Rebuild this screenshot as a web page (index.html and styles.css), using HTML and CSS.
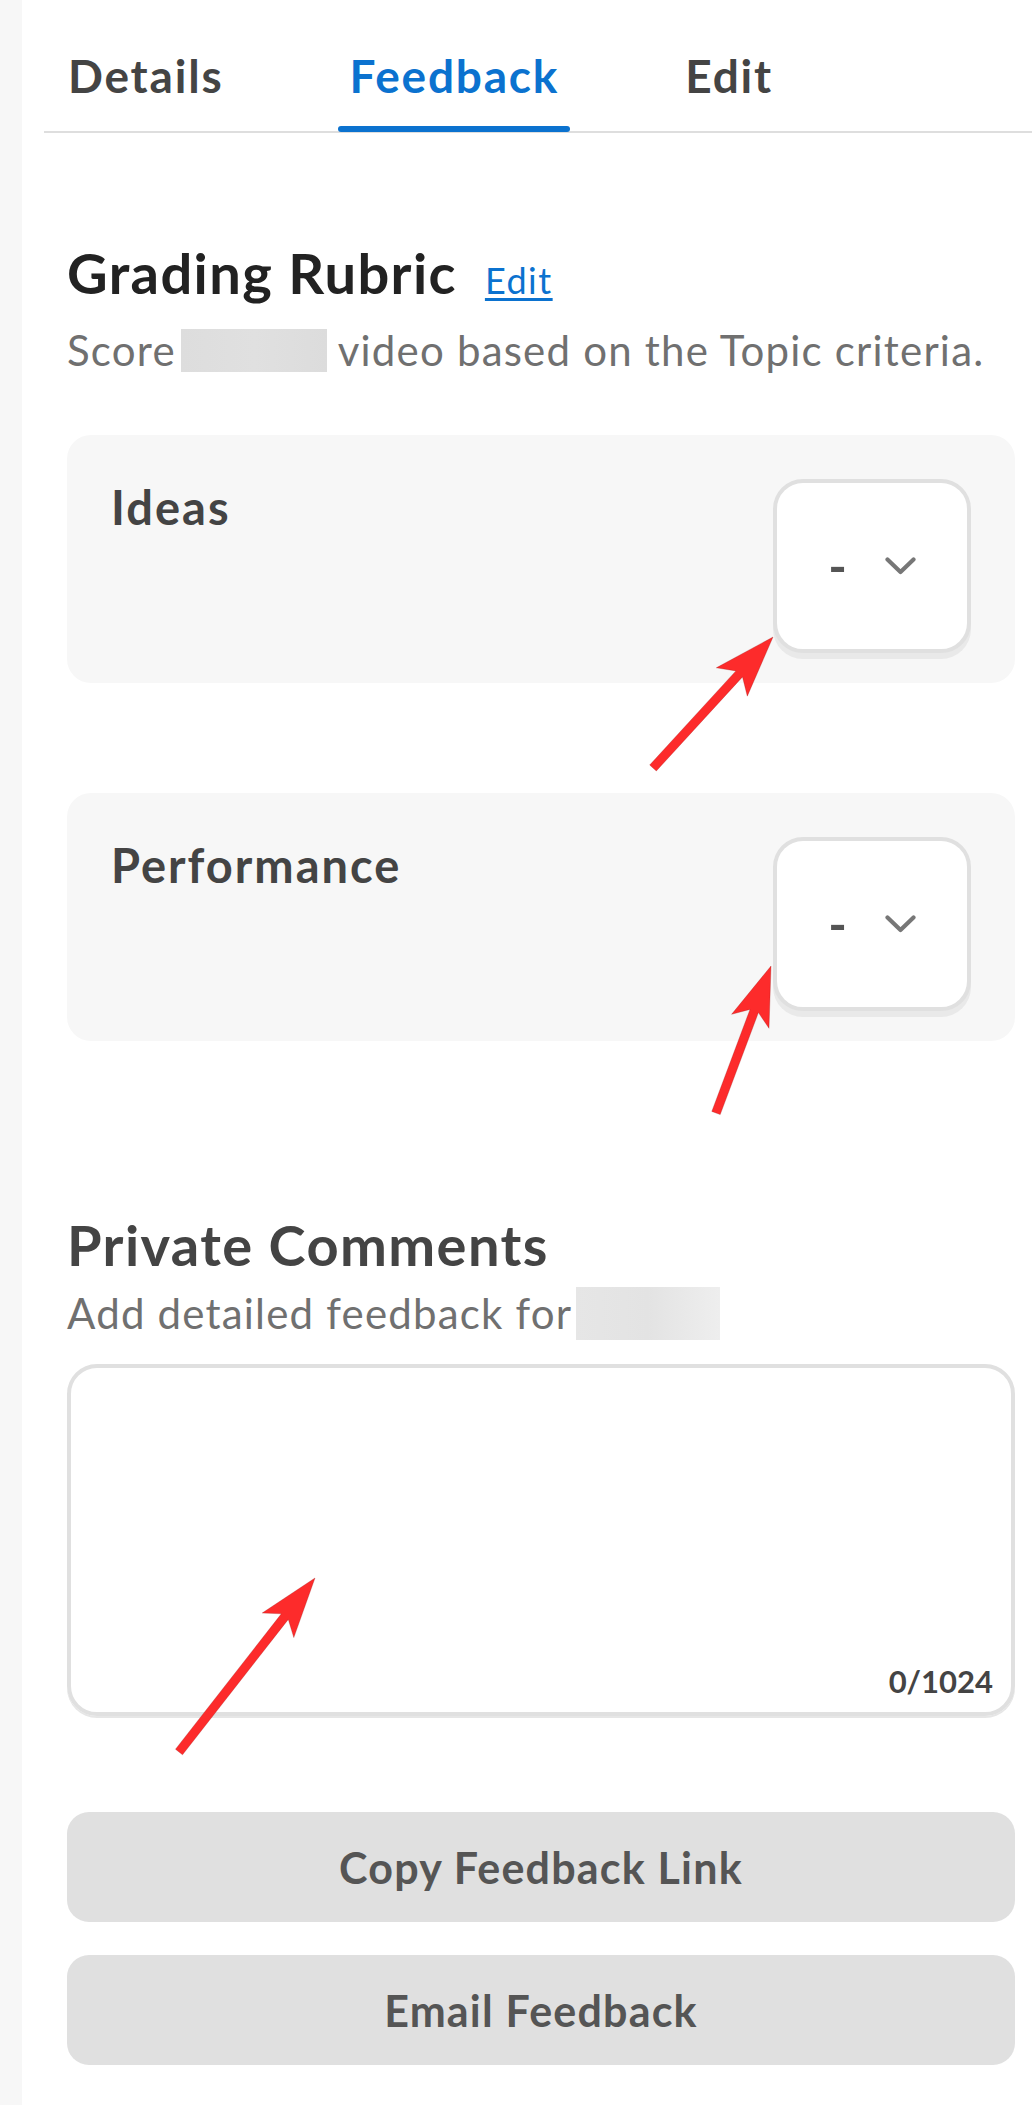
FILE: index.html
```html
<!DOCTYPE html>
<html lang="en">
<head>
<meta charset="utf-8">
<title>Feedback</title>
<link rel="stylesheet" href="styles.css">
</head>
<body>
<div class="page">
  <aside class="rail"></aside>
  <main class="main">
    <nav class="tabs">
      <a class="tab">Details</a>
      <a class="tab active">Feedback</a>
      <a class="tab">Edit</a>
    </nav>
    <div class="content">
      <section class="rubric">
        <div class="heading-row">
          <h2 class="heading">Grading Rubric</h2>
          <a class="edit-link">Edit</a>
        </div>
        <p class="sub">Score<span class="redact redact-a"></span> video based on the Topic criteria.</p>
        <div class="criteria">
          <div class="criterion">
            <span class="criterion-label">Ideas</span>
            <div class="score-select">
              <span class="score-value">-</span>
              <svg class="chevron" width="31" height="18" viewBox="0 0 31 18"><polyline points="2.5,2.5 15.5,15 28.5,2.5" fill="none" stroke="#777" stroke-width="4.2" stroke-linecap="round" stroke-linejoin="round"/></svg>
            </div>
          </div>
          <div class="criterion">
            <span class="criterion-label">Performance</span>
            <div class="score-select">
              <span class="score-value">-</span>
              <svg class="chevron" width="31" height="18" viewBox="0 0 31 18"><polyline points="2.5,2.5 15.5,15 28.5,2.5" fill="none" stroke="#777" stroke-width="4.2" stroke-linecap="round" stroke-linejoin="round"/></svg>
            </div>
          </div>
        </div>
      </section>
      <section class="comments">
        <h2 class="heading heading-muted">Private Comments</h2>
        <p class="sub sub-tight">Add detailed feedback for<span class="redact redact-b"></span></p>
        <div class="comment-box">
          <textarea class="comment-input"></textarea>
          <span class="counter">0/1024</span>
        </div>
        <div class="actions">
          <button class="action-btn">Copy Feedback Link</button>
          <button class="action-btn">Email Feedback</button>
        </div>
      </section>
    </div>
  </main>
  <svg class="annotations" width="1032" height="2105" viewBox="0 0 1032 2105">
    <polygon class="arrow" points="773,637 747.3,696.2 742.5,676.9 656.3,771 649.7,765 735.9,670.9 716.3,667.8"/>
    <polygon class="arrow" points="771,966 769,1028.3 758.4,1012.6 720.2,1114.6 711.8,1111.4 750,1009.4 731.6,1014.3"/>
    <polygon class="arrow" points="315,1578 293.8,1637.6 288.3,1619.4 182.5,1754.8 175.5,1749.2 281.3,1613.8 262.2,1613"/>
  </svg>
</div>
</body>
</html>
```

FILE: styles.css
```css
html, body {
  margin: 0;
  padding: 0;
  background: #ffffff;
}

body {
  font-family: "Lato", "Liberation Sans", sans-serif;
  color: #444444;
}

.page {
  position: relative;
  display: flex;
  min-height: 2105px;
}

.rail {
  width: 22px;
  flex: 0 0 22px;
  background: #f7f7f7;
}

.main {
  flex: 1;
  min-width: 0;
}

/* Tabs */
.tabs {
  display: flex;
  gap: 104px;
  margin-left: 22px;
  padding-left: 13px;
  border-bottom: 2px solid #dedede;
}

.tab {
  position: relative;
  padding: 48px 11px 27px;
  font-size: 46px;
  line-height: 56px;
  font-weight: 700;
  letter-spacing: 1.8px;
  color: #444444;
  text-decoration: none;
}

.tab.active {
  color: #0b72cf;
}

.tab.active::after {
  content: "";
  position: absolute;
  left: 0;
  right: 0;
  bottom: -1px;
  height: 6px;
  border-radius: 3px;
  background: #0b72cf;
}

/* Content */
.content {
  padding: 108px 17px 0 45px;
}

.heading-row {
  display: flex;
  align-items: baseline;
  gap: 28px;
}

.heading {
  margin: 0;
  font-size: 56px;
  line-height: 64px;
  font-weight: 700;
  letter-spacing: 1.4px;
  color: #222222;
}

.heading-muted {
  color: #444444;
}

.edit-link {
  font-size: 36px;
  line-height: 40px;
  font-weight: 400;
  letter-spacing: 1.5px;
  color: #0b72cf;
  text-decoration: underline;
  text-decoration-thickness: 3px;
  text-underline-offset: 4px;
}

.sub {
  margin: 17px 0 0;
  font-size: 42px;
  line-height: 56px;
  letter-spacing: 1.2px;
  color: #707070;
}

.sub-tight {
  margin-top: 8px;
}

.redact {
  display: inline-block;
  background: linear-gradient(90deg, #dddddd, #e0e0e0 50%, #dcdcdc);
}

.redact-a {
  width: 146px;
  height: 43px;
  margin-left: 5px;
  vertical-align: -6px;
}

.redact-b {
  width: 144px;
  height: 53px;
  margin-left: 4px;
  vertical-align: -11px;
  background: linear-gradient(90deg, #e6e6e6, #e3e3e3 50%, #eeeeee);
}

/* Criteria cards */
.criteria {
  margin-top: 57px;
  display: flex;
  flex-direction: column;
  gap: 110px;
}

.criterion {
  display: flex;
  justify-content: space-between;
  align-items: flex-start;
  background: #f7f7f7;
  border-radius: 24px;
  padding: 44px 44px 30px;
}

.criterion-label {
  font-size: 47px;
  line-height: 57px;
  font-weight: 700;
  letter-spacing: 2px;
  color: #444444;
}

.score-select {
  width: 198px;
  height: 174px;
  box-sizing: border-box;
  border: 4px solid #e0e0e0;
  border-radius: 30px;
  background: #ffffff;
  box-shadow: 0 6px 0 #e9e9e9;
  display: flex;
  align-items: center;
  justify-content: center;
  gap: 38px;
}

.score-value {
  font-size: 50px;
  line-height: 50px;
  font-weight: 700;
  color: #555555;
}

.chevron {
  display: block;
}

/* Comments */
.comments {
  margin-top: 172px;
}

.comment-box {
  margin-top: 23px;
  height: 352px;
  box-sizing: border-box;
  border: 4px solid #e0e0e0;
  border-radius: 30px;
  box-shadow: 0 2px 0 #e6e6e6;
  display: flex;
  flex-direction: column;
  padding: 0 18px 13px;
}

.comment-input {
  flex: 1;
  border: none;
  outline: none;
  resize: none;
  background: transparent;
  padding: 0;
  margin: 0;
}

.counter {
  align-self: flex-end;
  font-size: 31px;
  line-height: 36px;
  font-weight: 700;
  color: #444444;
}

.actions {
  margin-top: 96px;
  display: flex;
  flex-direction: column;
  gap: 33px;
}

.action-btn {
  height: 110px;
  border: none;
  border-radius: 22px;
  background: #e0e0e0;
  font-family: "Lato", "Liberation Sans", sans-serif;
  font-size: 43px;
  font-weight: 700;
  letter-spacing: 1.2px;
  color: #555555;
}

/* Annotation overlay */
.annotations {
  position: absolute;
  top: 0;
  left: 0;
  pointer-events: none;
}

.arrow {
  fill: #fd2b2b;
  stroke: rgba(150, 20, 20, 0.35);
  stroke-width: 0.8;
  stroke-linejoin: miter;
}
```
